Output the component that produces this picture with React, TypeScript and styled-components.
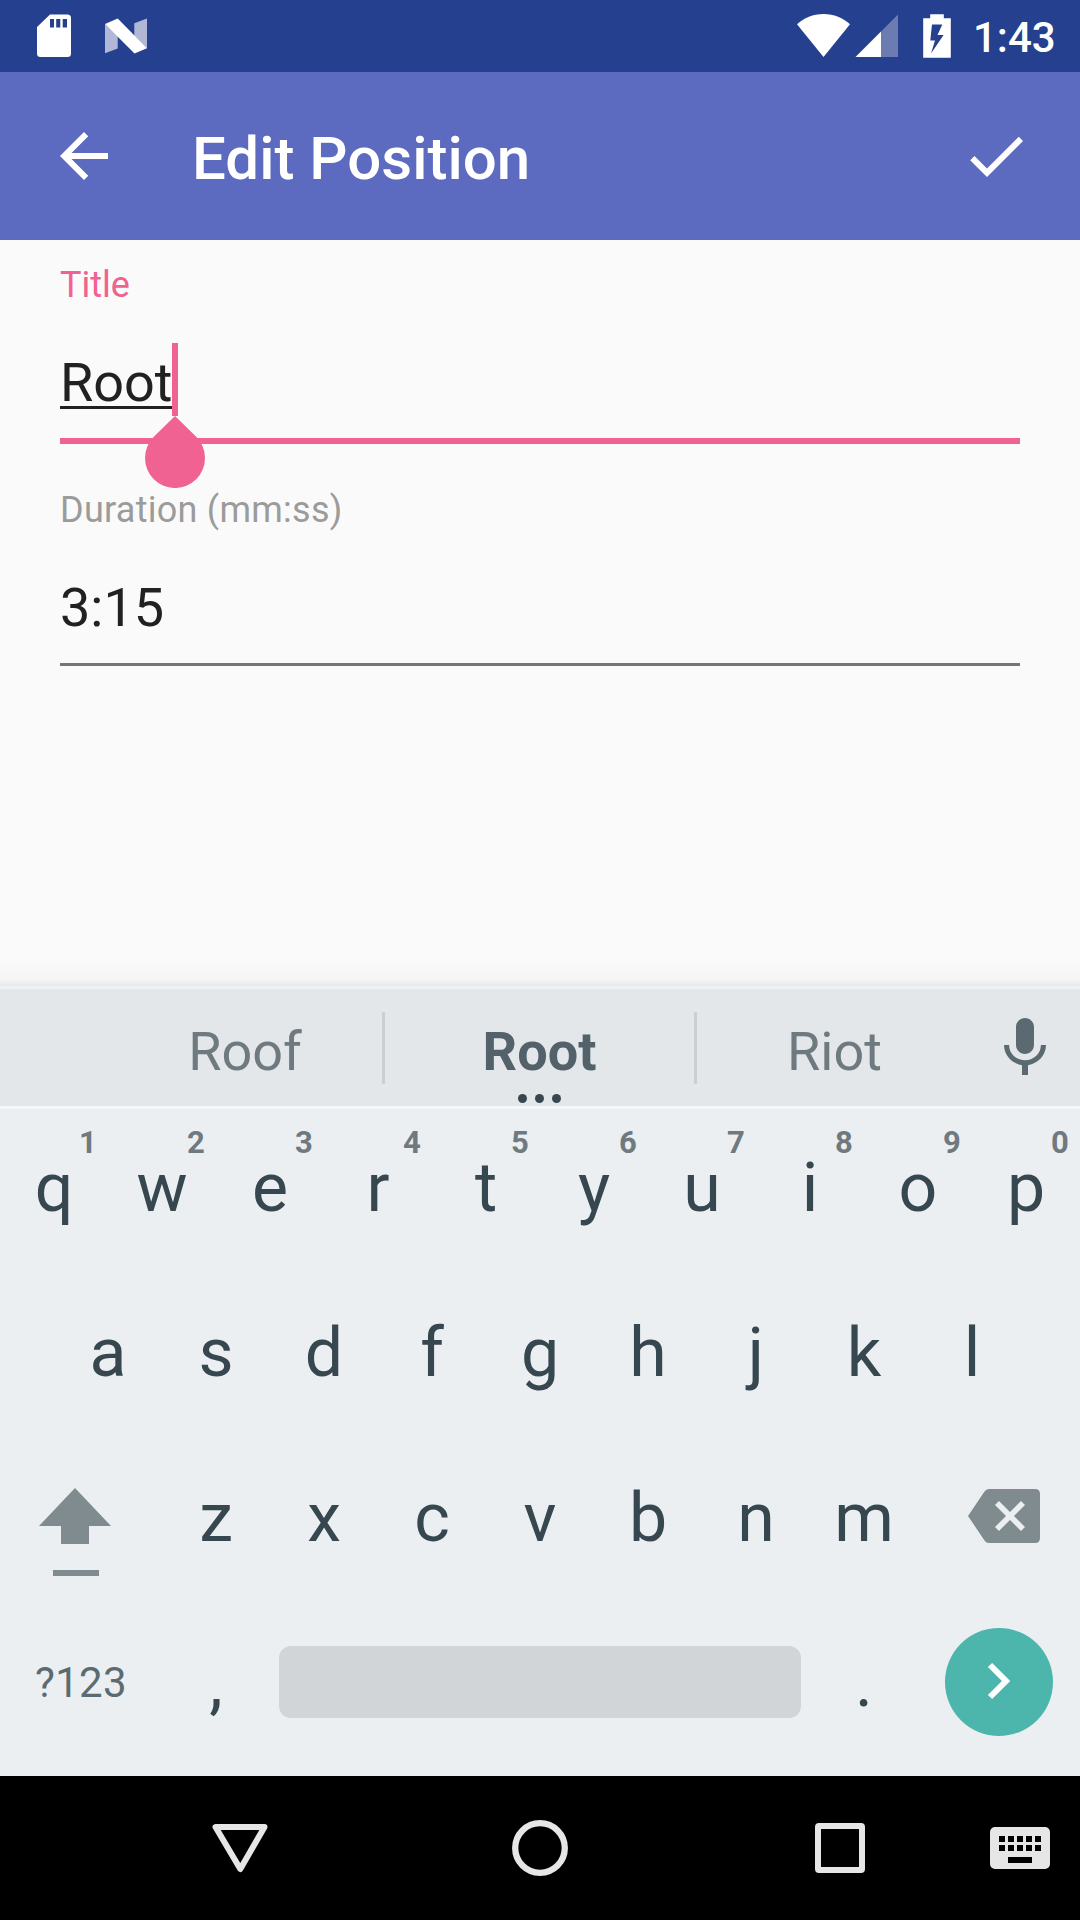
import React from "react";
import styled, { createGlobalStyle } from "styled-components";

const Global = createGlobalStyle`
  * { box-sizing: border-box; }
  body { margin: 0; background: #fafafa; font-family: Roboto, "Liberation Sans", sans-serif; }
  svg { display: block; flex: none; }
  button { border: 0; padding: 0; background: none; font: inherit; color: inherit; }
`;

const Screen = styled.div`
  width: 1080px;
  height: 1920px;
  display: flex;
  flex-direction: column;
  background: #fafafa;
  overflow: hidden;
`;

const StatusBar = styled.header`
  height: 72px;
  flex: none;
  display: flex;
  align-items: center;
  justify-content: space-between;
  padding: 0 25px 0 36px;
  background: #25408f;
  color: #fff;
`;

const StatusGroup = styled.div<{ $gap?: number }>`
  display: flex;
  align-items: center;
  gap: ${(p) => p.$gap ?? 0}px;
  height: 72px;
`;

const Clock = styled.span`
  width: 82px;
  margin-left: 21px;
  font-size: 42px;
  font-weight: 500;
  line-height: 48px;
  padding-top: 4px;
  text-align: right;
  white-space: nowrap;
`;

const BatteryIcon = styled.svg`
  margin-left: 23px;
`;

const SignalIcon = styled.svg`
  margin-left: 4px;
`;

const AppBar = styled.div`
  height: 168px;
  flex: none;
  display: flex;
  align-items: center;
  padding: 0 48px;
  background: #5c6bc0;
  color: #fff;
`;

const AppTitle = styled.h1`
  flex: 1;
  margin: 0 0 0 72px;
  padding-top: 6px;
  font-size: 60px;
  line-height: 72px;
  font-weight: 500;
`;

const IconButton = styled.button`
  width: 72px;
  height: 72px;
  display: flex;
`;

const Form = styled.main`
  flex: 1;
  min-height: 0;
  padding: 21px 60px 0;
  background: linear-gradient(#fafafa 0, #fafafa 720px, #f6f6f6 738px, #f0f0f0 742px, #e8e8e8 746px);
`;

const Field = styled.div`
  height: 225px;
  display: flex;
  flex-direction: column;
`;

const FieldLabel = styled.label<{ $active?: boolean }>`
  height: 48px;
  font-size: 36px;
  line-height: 48px;
  letter-spacing: ${(p) => (p.$active ? 0 : 0.27)}px;
  color: ${(p) => (p.$active ? "#f06292" : "#9b9b9b")};
`;

const FieldBody = styled.div<{ $active?: boolean }>`
  height: ${(p) => (p.$active ? 135 : 132)}px;
  padding-top: 34px;
  border-bottom: ${(p) => (p.$active ? "6px solid #f06292" : "3px solid #757575")};
`;

const Line = styled.div`
  display: flex;
  height: 72px;
`;

const Value = styled.span<{ $composing?: boolean }>`
  height: 66px;
  font-size: 54px;
  line-height: 80px;
  color: #212121;
  border-bottom: ${(p) => (p.$composing ? "3px solid #212121" : "0")};
`;

const Caret = styled.span`
  position: relative;
  width: 6px;
  height: 73px;
  margin-left: -1px;
  background: #f06292;
`;

const Handle = styled.svg`
  position: absolute;
  left: -27px;
  top: 73px;
`;

const Keyboard = styled.section`
  height: 790px;
  flex: none;
  background: #eceff1;
  color: #37474f;
`;

const Suggestions = styled.div`
  height: 123px;
  display: grid;
  grid-template-columns: 274px 3px 309px 3px 275px 108px;
  padding-left: 108px;
  border-top: 3px solid #eff1f2;
  border-bottom: 3px solid #f5f7f8;
  background: #e3e7e9;
`;

const Divider = styled.span`
  height: 72px;
  margin-top: 23px;
  background: #cbcfd1;
`;

const Suggestion = styled.button<{ $best?: boolean }>`
  display: flex;
  flex-direction: column;
  align-items: center;
  padding-top: 31px;
  font-size: 54px;
  line-height: 64px;
  font-weight: ${(p) => (p.$best ? 700 : 400)};
  color: ${(p) => (p.$best ? "#52616a" : "#6e7a80")};
`;

const Dots = styled.span`
  display: flex;
  gap: 8px;
  margin-top: 10px;
`;

const Dot = styled.i`
  width: 9px;
  height: 9px;
  border-radius: 50%;
  background: #37474f;
`;

const MicButton = styled.button`
  display: flex;
  align-items: flex-start;
  padding: 23px 0 0 17px;
`;

const KeyRow = styled.div<{ $inset?: number }>`
  height: 165px;
  display: flex;
  padding: 0 ${(p) => p.$inset ?? 0}px;
`;

const Key = styled.button`
  width: 108px;
  height: 165px;
  flex: none;
  display: flex;
  flex-direction: column;
  align-items: center;
  font-size: 68px;
  line-height: 80px;
`;

const Hint = styled.span`
  height: 41px;
  padding: 11px 0 0 68px;
  font-size: 31px;
  font-weight: 700;
  line-height: 46px;
  color: #6e7a80;
`;

const Letter = styled.span`
  margin-top: -2px;
`;

const WideKey = styled.button<{ $width: number; $left: number; $top: number }>`
  width: ${(p) => p.$width}px;
  height: 165px;
  flex: none;
  display: flex;
  align-items: flex-start;
  padding: ${(p) => p.$top}px 0 0 ${(p) => p.$left}px;
`;

const SymbolLabel = styled.span`
  font-size: 42px;
  line-height: 48px;
  letter-spacing: 0.3px;
  color: #5b6b71;
`;

const SpaceBar = styled.button`
  width: 522px;
  height: 72px;
  margin: 42px 9px 0;
  border-radius: 12px;
  background: #d1d5d8;
`;

const EnterKey = styled.button`
  width: 108px;
  height: 108px;
  margin: 24px 0 0 27px;
  border-radius: 50%;
  background: #4db6ac;
`;

const NavBar = styled.nav`
  height: 144px;
  flex: none;
  display: flex;
  align-items: center;
  background: #000;
  padding-left: 204px;
`;

const NavButton = styled.button<{ $gap?: number }>`
  width: 72px;
  height: 72px;
  margin-right: ${(p) => p.$gap ?? 0}px;
`;

const SdCard = () => (
  <svg width="36" height="48" viewBox="36 12 36 48">
    <path fill="#fff" fillRule="evenodd" d="M50 14.5H67.5Q71 14.5 71 18V53.500Q71 57 67.500 57H40.500Q37 57 37 53.500V27ZM50 19V27.500H54V19ZM56.200 19V27.500H60.300V19ZM62.700 19V27.500H67V19Z" />
  </svg>
);

const NLogo = () => (
  <svg width="48" height="48" viewBox="102 12 48 48">
    <path fill="#b0b8d6" d="M105 24L117.700 36V48.500L105 53.300ZM134.300 23.300L147 18.500V48.500L134.300 36Z" />
    <path fill="#fff" d="M105 24L117.700 18.400L147 48.300L134.500 53.500Z" />
  </svg>
);

const Wifi = () => (
  <svg width="54" height="48" viewBox="797 12 54 48">
    <path fill="#fff" d="M797 24.200C804 18 813 14 823.500 14S843 18 850 24.200L823.500 57Z" />
  </svg>
);

const Signal = () => (
  <SignalIcon width="44" height="48" viewBox="855 12 44 48">
    <path fill="#6c7cb3" d="M881 31.500L898 14.500V57H881Z" />
    <path fill="#fff" d="M855.500 57L881 31.500V57Z" />
  </SignalIcon>
);

const Battery = () => (
  <BatteryIcon width="30" height="48" viewBox="922 12 30 48">
    <path fill="#fff" fillRule="evenodd" d="M930.200 14.300H943.800V18.300H950.800V57.700H923.200V18.300H930.200ZM932 24.500L930.300 40.500H935L931 53.500L943.600 35H937.500L942.300 24.500Z" />
  </BatteryIcon>
);

const Icon24 = ({ d, fill = "currentColor" }: { d: string; fill?: string }) => (
  <svg width="72" height="72" viewBox="0 0 24 24">
    <path fill={fill} d={d} />
  </svg>
);

const topRow = "qwertyuiop".split("");
const middleRow = "asdfghjkl".split("");
const lowerRow = "zxcvbnm".split("");

const CharKey = ({ char, hint }: { char: string; hint?: string }) => (
  <Key>
    <Hint>{hint}</Hint>
    <Letter>{char}</Letter>
  </Key>
);

export default function App() {
  return (
    <Screen>
      <Global />
      <StatusBar>
        <StatusGroup $gap={30}>
          <SdCard />
          <NLogo />
        </StatusGroup>
        <StatusGroup>
          <Wifi />
          <Signal />
          <Battery />
          <Clock>1:43</Clock>
        </StatusGroup>
      </StatusBar>

      <AppBar>
        <IconButton aria-label="Back">
          <Icon24 d="M20 11H7.830l5.590-5.590L12 4l-8 8 8 8 1.410-1.410L7.830 13H20v-2z" />
        </IconButton>
        <AppTitle>Edit Position</AppTitle>
        <IconButton aria-label="Save">
          <Icon24 d="M9 16.170L4.830 12l-1.420 1.410L9 19 21 7l-1.410-1.410z" />
        </IconButton>
      </AppBar>

      <Form>
        <Field>
          <FieldLabel $active>Title</FieldLabel>
          <FieldBody $active>
            <Line>
              <Value $composing>Root</Value>
              <Caret>
                <Handle width="60" height="72" viewBox="0 0 60 72">
                  <path fill="#f06292" d="M30 0L51.200 20.800A30 30 0 1 1 8.800 20.800Z" />
                </Handle>
              </Caret>
            </Line>
          </FieldBody>
        </Field>
        <Field>
          <FieldLabel>Duration (mm:ss)</FieldLabel>
          <FieldBody>
            <Line>
              <Value>3:15</Value>
            </Line>
          </FieldBody>
        </Field>
      </Form>

      <Keyboard>
        <Suggestions>
          <Suggestion>Roof</Suggestion>
          <Divider />
          <Suggestion $best>
            Root
            <Dots>
              <Dot />
              <Dot />
              <Dot />
            </Dots>
          </Suggestion>
          <Divider />
          <Suggestion>Riot</Suggestion>
          <MicButton aria-label="Voice input">
            <Icon24
              fill="#5b6a71"
              d="M12 14c1.660 0 2.990-1.340 2.990-3L15 5c0-1.660-1.340-3-3-3S9 3.340 9 5v6c0 1.660 1.340 3 3 3zm5.300-3c0 3-2.540 5.100-5.300 5.100S6.700 14 6.700 11H5c0 3.410 2.720 6.230 6 6.720V21h2v-3.280c3.280-.480 6-3.300 6-6.720h-1.700z"
            />
          </MicButton>
        </Suggestions>
        <KeyRow>
          {topRow.map((c, i) => (
            <CharKey key={c} char={c} hint={String((i + 1) % 10)} />
          ))}
        </KeyRow>
        <KeyRow $inset={54}>
          {middleRow.map((c) => (
            <CharKey key={c} char={c} />
          ))}
        </KeyRow>
        <KeyRow>
          <WideKey $width={162} $left={36} $top={48} aria-label="Shift">
            <svg width="78" height="96" viewBox="36 1487 78 96">
              <path fill="#808b8f" d="M75 1488L111 1526H89V1544H61V1526H39ZM53 1570H99V1576H53Z" />
            </svg>
          </WideKey>
          {lowerRow.map((c) => (
            <CharKey key={c} char={c} />
          ))}
          <WideKey $width={162} $left={50} $top={50} aria-label="Delete">
            <svg width="72" height="54" viewBox="0 0 72 54">
              <path fill="#808b8f" d="M21 0H67Q72 0 72 5V49Q72 54 67 54H21Q18 54 16.500 51.500L0 27L16.500 2.500Q18 0 21 0Z" />
              <path stroke="#eceff1" strokeWidth="5.600" d="M29 14L55 40M55 14L29 40" />
            </svg>
          </WideKey>
        </KeyRow>
        <KeyRow>
          <WideKey $width={162} $left={35} $top={55}>
            <SymbolLabel>?123</SymbolLabel>
          </WideKey>
          <CharKey char="," />
          <SpaceBar aria-label="Space" />
          <CharKey char="." />
          <EnterKey aria-label="Next">
            <svg width="108" height="108" viewBox="945 1628 108 108">
              <path fill="none" stroke="#fff" strokeWidth="6" d="M990 1665L1006 1681L990 1697" />
            </svg>
          </EnterKey>
        </KeyRow>
      </Keyboard>

      <NavBar>
        <NavButton $gap={228} aria-label="Back">
          <svg width="72" height="72" viewBox="204 1812 72 72">
            <path fill="none" stroke="#e6e6e6" strokeWidth="6" strokeLinejoin="round" d="M215.500 1827H264.500L240.300 1869Z" />
          </svg>
        </NavButton>
        <NavButton $gap={228} aria-label="Home">
          <svg width="72" height="72" viewBox="0 0 72 72">
            <circle cx="36" cy="36" r="24.800" fill="none" stroke="#e6e6e6" strokeWidth="6.300" />
          </svg>
        </NavButton>
        <NavButton $gap={108} aria-label="Overview">
          <svg width="72" height="72" viewBox="0 0 72 72">
            <path fill="#e6e6e6" fillRule="evenodd" d="M15 11H57Q61 11 61 15V57Q61 61 57 61H15Q11 61 11 57V15Q11 11 15 11ZM17 17V55H55V17Z" />
          </svg>
        </NavButton>
        <NavButton aria-label="Keyboard">
          <svg width="72" height="72" viewBox="984 1812 72 72">
            <rect x="990" y="1827" width="60" height="42" rx="5" fill="#e6e6e6" />
            <path d="M999 1836h6v6h-6zM1008 1836h6v6h-6zM1017 1836h6v6h-6zM1026 1836h6v6h-6zM1035 1836h6v6h-6zM999 1845h6v6h-6zM1008 1845h6v6h-6zM1017 1845h6v6h-6zM1026 1845h6v6h-6zM1035 1845h6v6h-6zM1008 1857h24v6h-24z" />
          </svg>
        </NavButton>
      </NavBar>
    </Screen>
  );
}
